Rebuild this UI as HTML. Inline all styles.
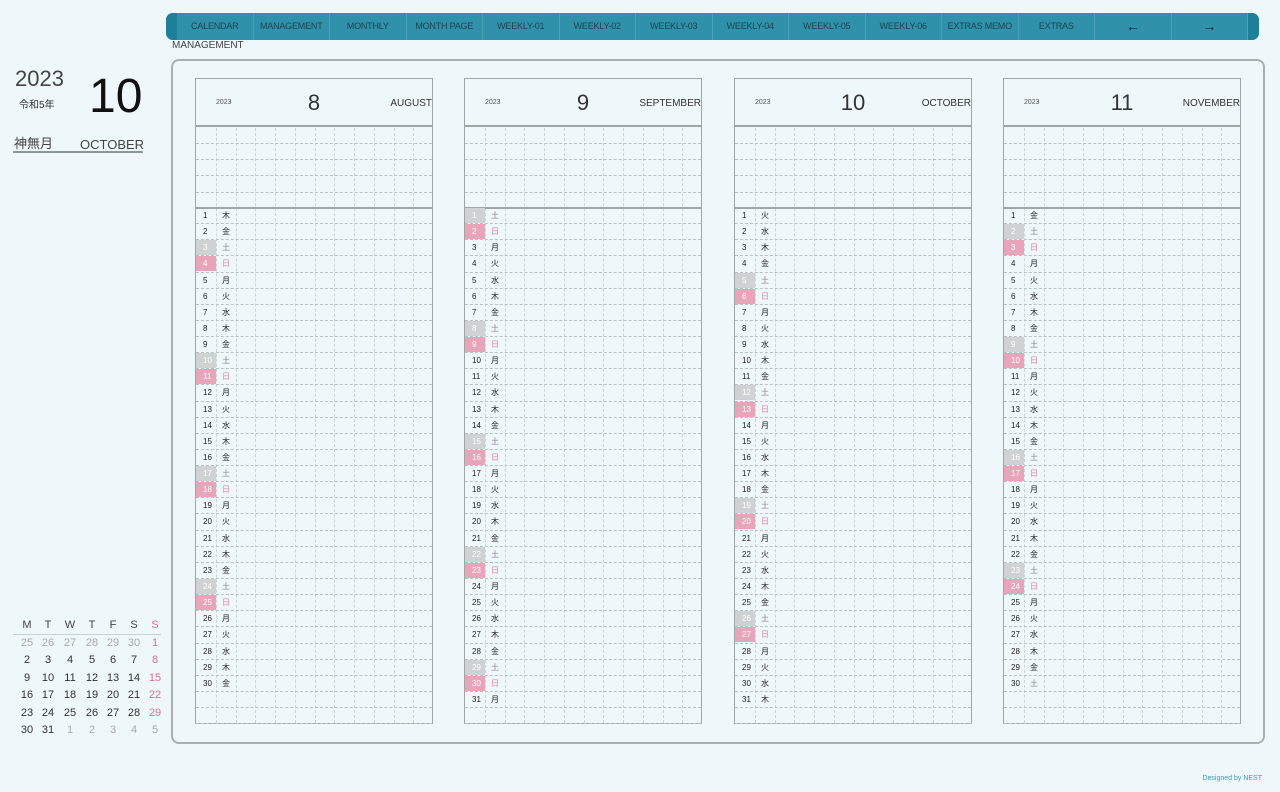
<!DOCTYPE html>
<html><head><meta charset="utf-8">
<style>
*{margin:0;padding:0;box-sizing:border-box}
body{width:1280px;height:792px;background:#eef7fa;font-family:"Liberation Sans","Noto Sans CJK JP",sans-serif;position:relative;overflow:hidden;color:#333}
.nav{position:absolute;left:166px;top:13px;width:1093px;height:27px;background:#3091aa;border-radius:7px;overflow:hidden}
.nav .capl{position:absolute;left:0;top:0;width:11px;height:27px;background:#1f7f99}
.nav .capr{position:absolute;right:0;top:0;width:11px;height:27px;background:#1f7f99}
.nav .it{position:absolute;top:0;height:27px;width:76.5px;line-height:27px;text-align:center;font-size:9px;color:#1d4250;border-right:1px solid #4aa2b8;letter-spacing:-0.2px}
.nav .ar{font-size:14px;color:#123}
.lbl{position:absolute;left:172px;top:40px;font-size:10px;color:#444}
.panel{position:absolute;left:171px;top:59px;width:1094px;height:685px;border:2px solid #a8b0b0;border-radius:8px}
.col{position:absolute;top:78px;width:238px;height:646px;border:1px solid #9ea6a6;background:#eef7fa}
.hd{position:absolute;left:0;top:0;width:100%;height:48px;border-bottom:2px solid #9ea6a6}
.hd .y{position:absolute;left:20px;top:20px;font-size:7px;color:#555}
.hd .m{position:absolute;left:0;width:100%;text-align:center;top:11px;font-size:22px;color:#333}
.hd .n{position:absolute;right:0;top:19px;font-size:10px;color:#333}
.row{position:absolute;left:0;width:100%;height:16.13px;border-bottom:1px dashed #b9c2c4}
.vl{position:absolute;top:49px;bottom:0;border-left:1px dashed #ccd4d6}
.sep{position:absolute;left:0;width:100%;top:128px;border-top:2px solid #9ea6a6}
.dn{position:absolute;left:0;width:20px;text-align:left;padding-left:7px;font-size:8px;line-height:15px;color:#222}
.wd{position:absolute;left:26px;font-size:8px;line-height:15px;color:#222}
.sat{background:#cfd2d2;color:#fff}
.sun{background:#e8a4b8;color:#fff}
.mini{position:absolute;font-size:11px;text-align:center;width:20px}
</style></head><body>
<div class="nav"><div class="capl"></div><div class="capr"></div>
</div>
<div class="lbl">MANAGEMENT</div>
<div style="position:absolute;left:15px;top:66px;font-size:22px;color:#444">2023</div>
<div style="position:absolute;left:19px;top:96px;font-size:10px;color:#333">令和5年</div>
<div style="position:absolute;left:89px;top:69px;font-size:48px;color:#111">10</div>
<div style="position:absolute;left:14px;top:133px;font-size:13px;color:#444">神無月</div>
<div style="position:absolute;left:80px;top:137px;font-size:13px;color:#444">OCTOBER</div>
<div style="position:absolute;left:13px;top:151px;width:130px;border-top:2px solid #8a9a9c"></div>
<div style="position:absolute;left:13px;top:634px;width:148px;border-top:1px solid #c8d2d4"></div>
<div class="panel"></div>
<div style="position:absolute;right:18px;top:775px;font-size:7px;color:#3b9ab3">Designed by NEST</div>
<div id="cols"></div>
<script>
var nav=document.querySelector('.nav');
var items=["CALENDAR","MANAGEMENT","MONTHLY","MONTH PAGE","WEEKLY-01","WEEKLY-02","WEEKLY-03","WEEKLY-04","WEEKLY-05","WEEKLY-06","EXTRAS MEMO","EXTRAS","←","→"];
items.forEach(function(t,i){var d=document.createElement('div');d.className='it'+(i>11?' ar':'');d.style.left=(11+i*76.5)+'px';d.textContent=t;nav.appendChild(d);});
var W=["月","火","水","木","金","土","日"];
var months=[[195,8,"AUGUST",30,3],[464,9,"SEPTEMBER",31,5],[734,10,"OCTOBER",31,1],[1003,11,"NOVEMBER",30,4]];
var h='';
months.forEach(function(m,mi){
 h+='<div class="col" style="left:'+m[0]+'px"><div class="hd"><span class="y">2023</span><span class="m">'+m[1]+'</span><span class="n">'+m[2]+'</span></div>';
 for(var k=1;k<=11;k++)h+='<div class="vl" style="left:'+(k*19.75)+'px"></div>';
 for(var r=0;r<4;r++)h+='<div class="row" style="top:'+(49+r*16.13)+'px;height:16.13px"></div>';
 h+='<div class="sep"></div>';
 for(var d=0;d<32;d++){var top=129+d*16.13;
  h+='<div class="row" style="top:'+top+'px"></div>';
  if(d<m[3]){var w=(m[4]+d)%7;var cls=w==5?'sat':(w==6?'sun':'');
   if(mi==3&&d==29)cls='';
   h+='<div class="dn '+cls+'" style="top:'+top+'px;height:15px">'+(d+1)+'</div>';
   h+='<div class="wd" style="top:'+top+'px;color:'+(w==6?'#e0809c':(w==5?'#888':'#222'))+'">'+W[w]+'</div>';}
 }
 h+='</div>';
});
var xs=[27,48,70,92,113,134,155];
["M","T","W","T","F","S","S"].forEach(function(t,i){h+='<div class="mini" style="left:'+(xs[i]-10)+'px;top:619px;color:'+(i==6?'#d9708f':'#444')+'">'+t+'</div>';});
var cal=[[25,26,27,28,29,30,1],[2,3,4,5,6,7,8],[9,10,11,12,13,14,15],[16,17,18,19,20,21,22],[23,24,25,26,27,28,29],[30,31,1,2,3,4,5]];
cal.forEach(function(row,r){row.forEach(function(v,i){var dim=(r==0&&i<6)||(r==5&&i>1);var c=dim?'#aaa':(i==6?'#d9708f':'#333');if(r==5&&i==6)c='#aaa';if(r==0&&i==6)c='#d9708f';
 h+='<div class="mini" style="left:'+(xs[i]-10)+'px;top:'+(637+r*17.4)+'px;color:'+c+'">'+v+'</div>';});});
document.getElementById('cols').innerHTML=h;
</script>
</body></html>
